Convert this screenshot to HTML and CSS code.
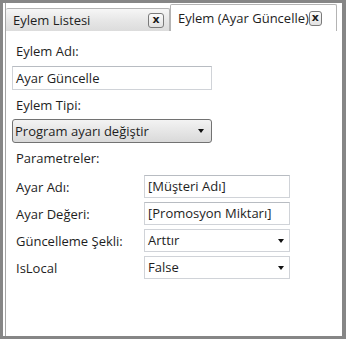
FILE: index.html
```html
<!DOCTYPE html>
<html>
<head>
    <title>Eylem</title>
    <link rel="stylesheet" href="styles.css">
</head>
<body>
    <div class="window">
        <div class="tabctl">
            <div class="tab-strip">
                <div class="tab">
                    <span class="tab-title">Eylem Listesi</span>
                    <span class="close-btn">x</span>
                </div>
                <div class="tab active">
                    <span class="tab-title">Eylem (Ayar Güncelle)</span>
                    <span class="close-btn">x</span>
                </div>
            </div>

            <div class="panel">
                <div class="label">Eylem Adı:</div>
                <div class="textbox wide">Ayar Güncelle</div>

                <div class="label second">Eylem Tipi:</div>
                <div class="combo wide">
                    <span>Program ayarı değiştir</span>
                    <span class="arrow"></span>
                </div>

                <div class="label params">Parametreler:</div>

                <div class="param-grid">
                    <div class="plabel">Ayar Adı:</div>
                    <div class="textbox">[Müşteri Adı]</div>

                    <div class="plabel">Ayar Değeri:</div>
                    <div class="textbox">[Promosyon Miktarı]</div>

                    <div class="plabel">Güncelleme Şekli:</div>
                    <div class="combo flat">
                        <span>Arttır</span>
                        <span class="arrow"></span>
                    </div>

                    <div class="plabel">IsLocal</div>
                    <div class="combo flat">
                        <span>False</span>
                        <span class="arrow"></span>
                    </div>
                </div>
            </div>
        </div>
    </div>
</body>
</html>
```

FILE: styles.css
```css
body {
    margin: 0;
    background: white;
    font-family: "Open Sans", "Noto Sans", sans-serif;
    font-size: 13px;
    color: #1e1e1e;
}
.window {
    width: 346px;
    height: 339px;
    box-sizing: border-box;
    border: 3px solid #868686;
    border-right-width: 4px;
    background: white;
    padding-left: 2px;
}
.tabctl {
    height: 100%;
    border-left: 1px solid #a5a5a5;
    display: flex;
    flex-direction: column;
}
.tab-strip {
    height: 28px;
    display: flex;
    align-items: flex-end;
    padding-top: 1px;
    box-sizing: border-box;
}
.tab {
    width: 164px;
    height: 23px;
    box-sizing: border-box;
    border: 1px solid #b4b4b4;
    border-bottom: none;
    border-left: none;
    border-radius: 2px 2px 0 0;
    background: linear-gradient(#f6f6f6, #e6e6e6 55%, #dcdcdc);
    display: flex;
    align-items: center;
    padding: 0 5px 0 7px;
}
.tab.active {
    width: 167px;
    height: 27px;
    background: white;
    border-left: 1px solid #b4b4b4;
    padding: 0 7px 0 7px;
}
.tab-title {
    flex: 1;
    white-space: nowrap;
}
.close-btn {
    width: 16px;
    height: 15px;
    box-sizing: border-box;
    border: 1px solid #7a7a7a;
    border-radius: 3px;
    background: linear-gradient(#fbfbfb, #e2e2e2);
    font-family: "DejaVu Sans", sans-serif;
    font-weight: bold;
    font-size: 11px;
    line-height: 12px;
    text-align: center;
    color: #1a1a1a;
}
.tab.active .close-btn {
    margin-right: 7px;
}
.panel {
    flex: 1;
    padding: 9px 0 0 6px;
}
.label {
    height: 22px;
    line-height: 22px;
    padding-left: 4px;
    margin-bottom: 4px;
}
.label.second {
    margin-bottom: 3px;
}
.label.params {
    margin-top: 2px;
    margin-bottom: 6px;
}
.textbox {
    height: 24px;
    box-sizing: border-box;
    border: 1px solid #d0d3d8;
    border-top-color: #b8bcc2;
    background: white;
    line-height: 22px;
    padding-left: 3px;
    white-space: nowrap;
}
.wide {
    width: 200px;
    margin-bottom: 4px;
}
.combo {
    height: 24px;
    box-sizing: border-box;
    border: 1px solid #727272;
    border-radius: 3px;
    background: linear-gradient(#f3f3f3, #e6e6e6 50%, #d9d9d9);
    display: flex;
    align-items: center;
    padding: 0 7px 0 2px;
}
.combo span:first-child {
    flex: 1;
}
.combo.flat {
    border: 1px solid #d0d3d8;
    border-radius: 0;
    background: white;
    padding: 0 5px 0 3px;
}
.arrow {
    width: 0;
    height: 0;
    border-left: 3.5px solid transparent;
    border-right: 3.5px solid transparent;
    border-top: 4px solid #111;
}
.param-grid {
    display: grid;
    grid-template-columns: 128px 146px;
    grid-auto-rows: 23px;
    row-gap: 4px;
    align-items: center;
    margin-left: 4px;
}
.plabel {
    white-space: nowrap;
}
.param-grid .textbox,
.param-grid .combo {
    height: 23px;
    line-height: 21px;
}
```
